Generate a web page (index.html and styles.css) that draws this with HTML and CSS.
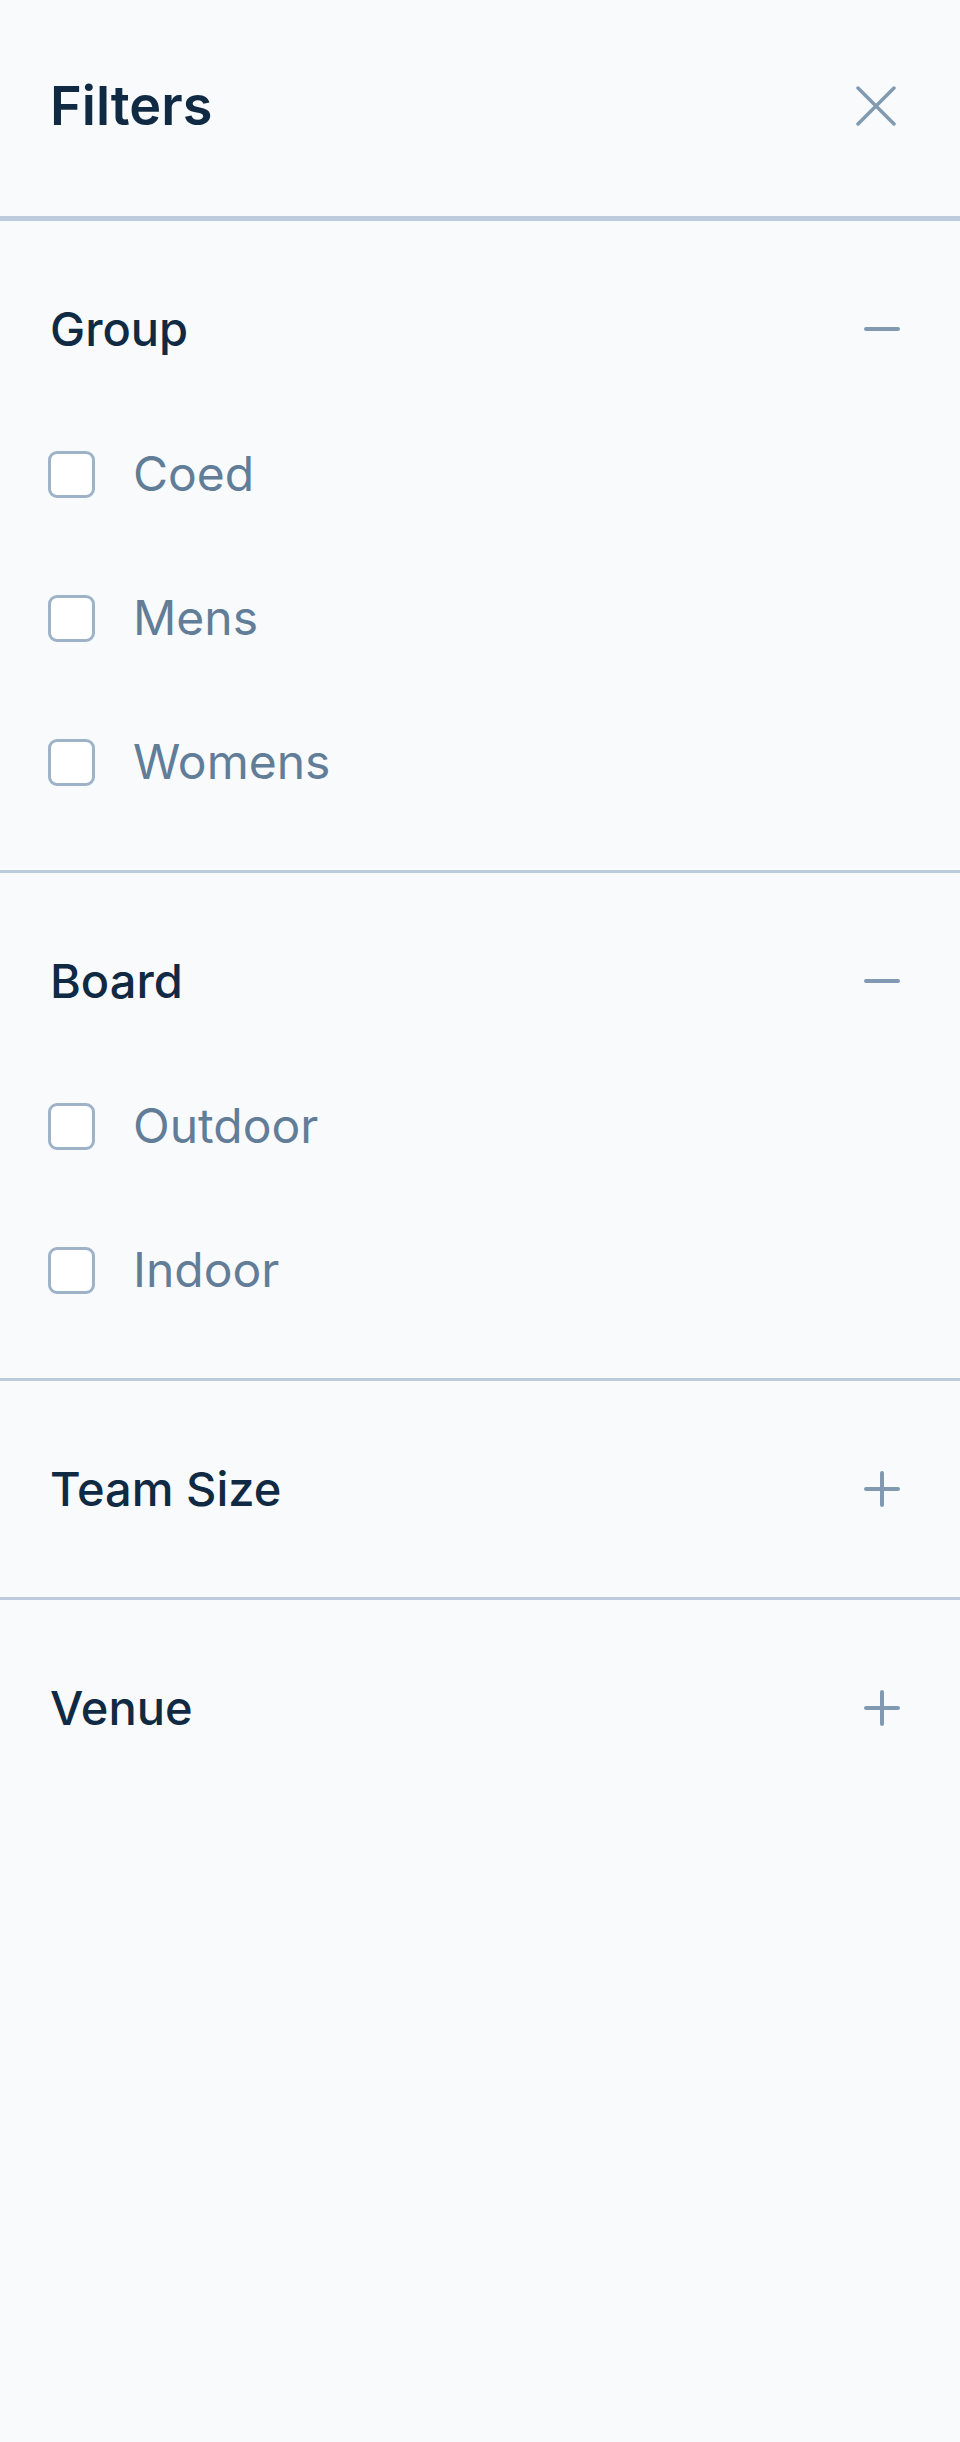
FILE: index.html
```html
<!DOCTYPE html>
<html lang="en">
<head>
<meta charset="utf-8">
<title>Filters</title>
<link rel="stylesheet" href="styles.css">
</head>
<body>
<div class="drawer">
  <header class="drawer-header">
    <h1 class="drawer-title">Filters</h1>
    <button class="close-btn" aria-label="Close">
      <svg width="40" height="40" viewBox="0 0 40 40" fill="none" stroke="#829ab1" stroke-width="3.5" stroke-linecap="round">
        <path d="M2 2L38 38M38 2L2 38"/>
      </svg>
    </button>
  </header>

  <section class="filter-section">
    <div class="section-head">
      <h2 class="section-title">Group</h2>
      <svg class="toggle" width="36" height="36" viewBox="0 0 36 36" fill="none" stroke="#829ab1" stroke-width="4" stroke-linecap="round">
        <path d="M2 18H34"/>
      </svg>
    </div>
    <ul class="options">
      <li class="option"><span class="checkbox"></span><span class="option-label">Coed</span></li>
      <li class="option"><span class="checkbox"></span><span class="option-label">Mens</span></li>
      <li class="option"><span class="checkbox"></span><span class="option-label">Womens</span></li>
    </ul>
  </section>

  <section class="filter-section">
    <div class="section-head">
      <h2 class="section-title">Board</h2>
      <svg class="toggle" width="36" height="36" viewBox="0 0 36 36" fill="none" stroke="#829ab1" stroke-width="4" stroke-linecap="round">
        <path d="M2 18H34"/>
      </svg>
    </div>
    <ul class="options">
      <li class="option"><span class="checkbox"></span><span class="option-label">Outdoor</span></li>
      <li class="option"><span class="checkbox"></span><span class="option-label">Indoor</span></li>
    </ul>
  </section>

  <section class="filter-section">
    <div class="section-head">
      <h2 class="section-title">Team Size</h2>
      <svg class="toggle" width="36" height="36" viewBox="0 0 36 36" fill="none" stroke="#829ab1" stroke-width="4" stroke-linecap="round">
        <path d="M2 18H34M18 2V34"/>
      </svg>
    </div>
  </section>

  <section class="filter-section last">
    <div class="section-head">
      <h2 class="section-title">Venue</h2>
      <svg class="toggle" width="36" height="36" viewBox="0 0 36 36" fill="none" stroke="#829ab1" stroke-width="4" stroke-linecap="round">
        <path d="M2 18H34M18 2V34"/>
      </svg>
    </div>
  </section>
</div>
</body>
</html>
```

FILE: styles.css
```css
* {
  box-sizing: border-box;
}

html, body {
  margin: 0;
  padding: 0;
  background: #f8fafc;
}

body {
  font-family: Inter, "Noto Sans", "Liberation Sans", sans-serif;
  color: #102a43;
  min-height: 2442px;
}

.drawer {
  width: 960px;
}

.drawer-header {
  height: 221px;
  border-bottom: 5px solid #bcccdc;
  display: flex;
  align-items: center;
  justify-content: space-between;
  padding: 0 64px 4px 50px;
}

.drawer-title {
  margin: 0;
  font-size: 54px;
  font-weight: 600;
  line-height: 72px;
  color: #102a43;
}

.close-btn {
  border: 0;
  background: none;
  padding: 0;
  width: 40px;
  height: 40px;
  display: flex;
}

.filter-section {
  padding: 72px 60px 72px 50px;
  border-bottom: 3px solid #bcccdc;
}

.filter-section.last {
  border-bottom: 0;
}

.section-head {
  height: 72px;
  display: flex;
  align-items: center;
  justify-content: space-between;
}

.section-title {
  margin: 0;
  font-size: 47px;
  font-weight: 500;
  line-height: 72px;
  color: #102a43;
}

.toggle {
  display: block;
}

.options {
  list-style: none;
  margin: 73px 0 0 -2px;
  padding: 0;
  display: flex;
  flex-direction: column;
  gap: 72px;
}

.option {
  height: 72px;
  display: flex;
  align-items: center;
  gap: 38px;
}

.checkbox {
  width: 47px;
  height: 47px;
  border: 3px solid #9fb3c8;
  border-radius: 9px;
  background: #ffffff;
  flex: none;
}

.option-label {
  font-size: 48px;
  font-weight: 400;
  line-height: 72px;
  color: #627d98;
}
```
